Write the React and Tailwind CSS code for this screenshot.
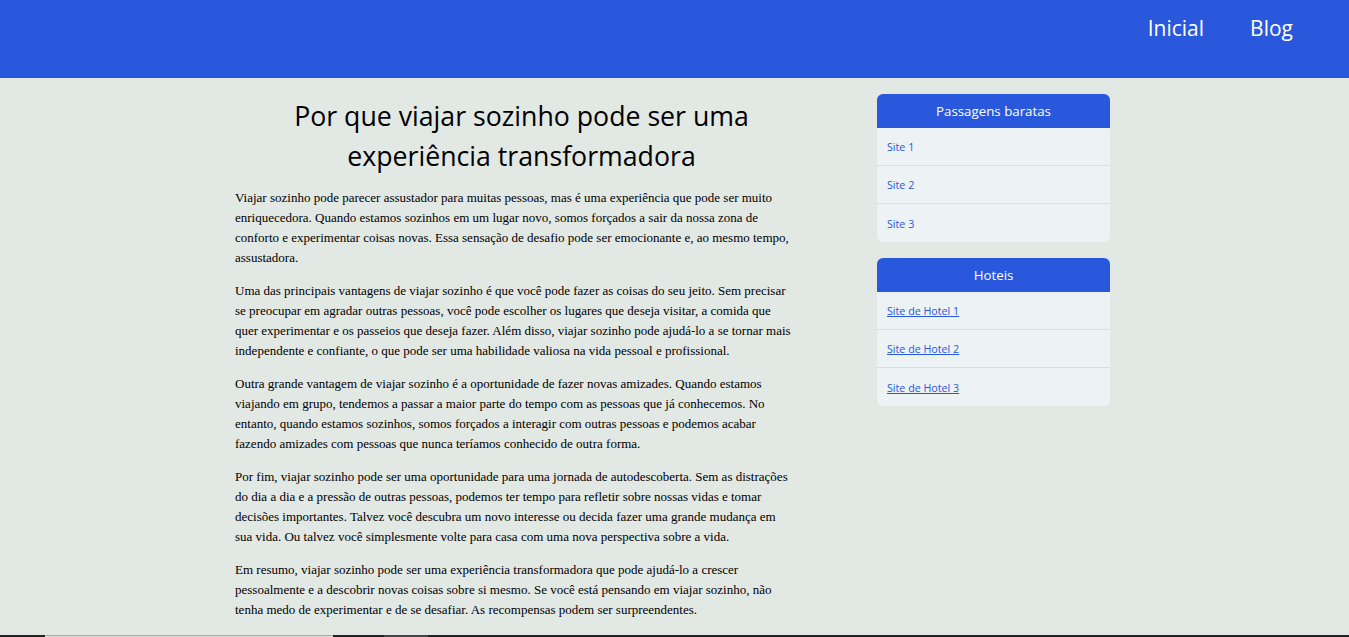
export default function App() {
  const paras = [
    "Viajar sozinho pode parecer assustador para muitas pessoas, mas é uma experiência que pode ser muito enriquecedora. Quando estamos sozinhos em um lugar novo, somos forçados a sair da nossa zona de conforto e experimentar coisas novas. Essa sensação de desafio pode ser emocionante e, ao mesmo tempo, assustadora.",
    "Uma das principais vantagens de viajar sozinho é que você pode fazer as coisas do seu jeito. Sem precisar se preocupar em agradar outras pessoas, você pode escolher os lugares que deseja visitar, a comida que quer experimentar e os passeios que deseja fazer. Além disso, viajar sozinho pode ajudá-lo a se tornar mais independente e confiante, o que pode ser uma habilidade valiosa na vida pessoal e profissional.",
    "Outra grande vantagem de viajar sozinho é a oportunidade de fazer novas amizades. Quando estamos viajando em grupo, tendemos a passar a maior parte do tempo com as pessoas que já conhecemos. No entanto, quando estamos sozinhos, somos forçados a interagir com outras pessoas e podemos acabar fazendo amizades com pessoas que nunca teríamos conhecido de outra forma.",
    "Por fim, viajar sozinho pode ser uma oportunidade para uma jornada de autodescoberta. Sem as distrações do dia a dia e a pressão de outras pessoas, podemos ter tempo para refletir sobre nossas vidas e tomar decisões importantes. Talvez você descubra um novo interesse ou decida fazer uma grande mudança em sua vida. Ou talvez você simplesmente volte para casa com uma nova perspectiva sobre a vida.",
    "Em resumo, viajar sozinho pode ser uma experiência transformadora que pode ajudá-lo a crescer pessoalmente e a descobrir novas coisas sobre si mesmo. Se você está pensando em viajar sozinho, não tenha medo de experimentar e de se desafiar. As recompensas podem ser surpreendentes.",
  ];
  const cards = [
    { title: "Passagens baratas", links: ["Site 1", "Site 2", "Site 3"], underline: false },
    { title: "Hoteis", links: ["Site de Hotel 1", "Site de Hotel 2", "Site de Hotel 3"], underline: true },
  ];
  return (
    <div className="min-h-screen bg-[#e2e8e4] font-['Open_Sans',sans-serif]">
      <header className="h-[78px] bg-[#2a58dc] flex justify-end items-start pr-[56px] pt-[13px] gap-[46px] text-white text-[21px] leading-[30px]">
        <a href="#">Inicial</a>
        <a href="#">Blog</a>
      </header>
      <div className="flex ml-[235px] gap-[69px] pt-[16px]">
        <main className="w-[573px] pb-[2px]">
          <h1 className="text-center text-[26.7px] leading-[40px] text-black pt-[2px]">
            Por que viajar sozinho pode ser uma<br />experiência transformadora
          </h1>
          <div className="mt-[12px] pr-[13px] font-['Liberation_Serif',serif] text-[13px] leading-[20px] text-black">
            {paras.map((p, i) => (
              <p key={i} className="mb-[13px]">{p}</p>
            ))}
          </div>
        </main>
        <aside className="w-[233px] flex flex-col gap-[16px]">
          {cards.map((c, i) => (
            <div key={i} className="rounded-[6px] overflow-hidden bg-[#edf2f5]">
              <div className="h-[34px] bg-[#2a58dc] text-white text-[13.3px] flex items-center justify-center pt-[1px]">{c.title}</div>
              {c.links.map((l, j) => (
                <div key={j} className={"h-[38px] flex items-center pl-[10px] pt-[2px] " + (j < c.links.length - 1 ? "border-b border-[#d6dee4]" : "")}>
                  <a href="#" className={"text-[10.7px] text-[#2a58dc] " + (c.underline ? "underline" : "no-underline")}>{l}</a>
                </div>
              ))}
            </div>
          ))}
        </aside>
      </div>
      <footer className="h-[3px] bg-[#222] flex">
        <div className="w-[45px]" />
        <div className="w-[288px] bg-[#d8dcd8] border-t border-[#aaa]" />
        <div className="w-[51px]" />
        <div className="w-[44px] bg-[#444]" />
      </footer>
    </div>
  );
}
